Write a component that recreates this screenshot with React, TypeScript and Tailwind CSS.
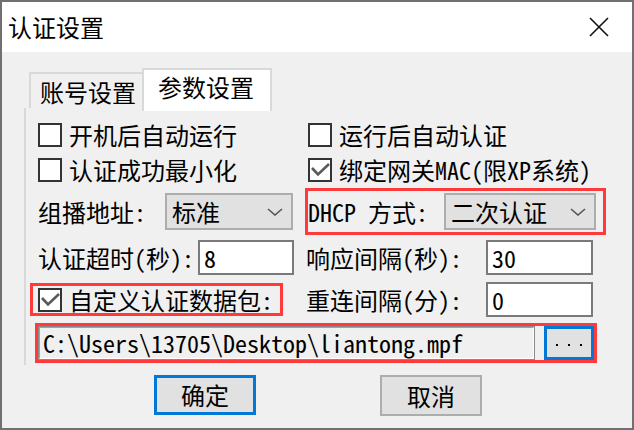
import type { ReactNode } from 'react';

function Checkbox({ checked = false }: { checked?: boolean }) {
  return (
    <div className="w-[24px] h-[24px] border-2 border-[#333] bg-white shrink-0">
      {checked && (
        <svg viewBox="0 0 20 20" className="w-[20px] h-[20px]">
          <polyline points="2,8 8,14.5 19,4" fill="none" stroke="#5a5a5a" strokeWidth="2.6" />
        </svg>
      )}
    </div>
  );
}

function Chevron() {
  return (
    <svg viewBox="0 0 16 8" className="w-[16px] h-[8px]">
      <polyline points="1,1 8,7 15,1" fill="none" stroke="#555" strokeWidth="1.6" />
    </svg>
  );
}

function Select({ value, className }: { value: string; className: string }) {
  return (
    <div
      className={`h-[37px] border-2 border-[#adadad] bg-[#e1e1e1] flex items-center justify-between pl-[5px] pr-[8px] ${className}`}
    >
      <span>{value}</span>
      <Chevron />
    </div>
  );
}

function Input({ value, className }: { value: string; className: string }) {
  return (
    <div className={`h-[35px] border-2 border-[#7a7a7a] bg-white flex items-center pl-[4px] ${className}`}>
      {value}
    </div>
  );
}

function Check({ checked, children }: { checked?: boolean; children: ReactNode }) {
  return (
    <div className="flex items-center gap-[7px]">
      <Checkbox checked={checked} />
      <span>{children}</span>
    </div>
  );
}

export default function App() {
  return (
    <div className="w-[634px] h-[430px] border-2 border-[#707070] bg-[#f0f0f0] text-black text-[24px] leading-[24px] font-['Noto_Sans_Mono_CJK_SC','Noto_Sans_CJK_SC',monospace] overflow-hidden">
      <div className="h-[50px] bg-white flex items-center justify-between pl-[6px] pr-[23px]">
        <span className="font-['Noto_Sans_CJK_SC',sans-serif] text-[24px]">认证设置</span>
        <svg viewBox="0 0 20 20" className="w-[20px] h-[20px]">
          <path d="M1 1 L19 19 M19 1 L1 19" stroke="#111" strokeWidth="1.6" fill="none" />
        </svg>
      </div>

      <div className="pt-[16px] pl-[22px]">
        <div className="relative z-10 flex items-end pl-[5px] h-[43px]">
          <div className="w-[115px] h-[36px] mb-[3px] border-2 border-b-0 border-[#d9d9d9] pl-[9px] pt-[6px]">
            账号设置
          </div>
          <div className="-ml-[2px] w-[130px] h-[43px] bg-white border-2 border-b-0 border-[#d9d9d9] pl-[14px] pt-[5px]">
            参数设置
          </div>
        </div>

        <div className="-mt-[3px] h-[257px] border-l-2 border-[#d9d9d9] pl-[12px] pt-[11px]">
          <div className="h-[32px] flex items-center">
            <div className="w-[270px]">
              <Check>开机后自动运行</Check>
            </div>
            <Check>运行后自动认证</Check>
          </div>

          <div className="mt-[3px] h-[32px] flex items-center">
            <div className="w-[270px]">
              <Check>认证成功最小化</Check>
            </div>
            <Check checked>绑定网关MAC(限XP系统)</Check>
          </div>

          <div className="mt-[2px] h-[47px] flex items-center">
            <div className="w-[255px] flex items-center justify-between">
              <span>组播地址:</span>
              <Select value="标准" className="w-[128px]" />
            </div>
            <div className="ml-[12px] w-[301px] h-[47px] border-[3px] border-[#fe3a3a] flex items-center justify-between pr-[7px]">
              <span>DHCP 方式:</span>
              <Select value="二次认证" className="w-[152px]" />
            </div>
          </div>

          <div className="mt-[5px] h-[35px] flex items-center">
            <div className="w-[256px] flex items-center justify-between">
              <span>认证超时(秒):</span>
              <Input value="8" className="w-[96px]" />
            </div>
            <div className="ml-[12px] w-[287px] flex items-center justify-between">
              <span>响应间隔(秒):</span>
              <Input value="30" className="w-[107px]" />
            </div>
          </div>

          <div className="mt-[7px] h-[35px] flex items-center">
            <div className="-ml-[8px] w-[253px] h-[33px] border-[3px] border-[#fe3a3a] pl-[5px] flex items-center">
              <Check checked>自定义认证数据包:</Check>
            </div>
            <div className="ml-[23px] w-[287px] flex items-center justify-between">
              <span>重连间隔(分):</span>
              <Input value="0" className="w-[107px]" />
            </div>
          </div>

          <div className="mt-[6px] -ml-[3px] w-[562px] h-[40px] border-[3px] border-[#fe3a3a] flex items-center justify-between">
            <div className="w-[497px] h-[34px] border border-[#8a8a8a] flex">
              <div className="flex-1 border border-t-[#a0a0a0] border-l-[#a0a0a0] border-r-white border-b-white flex items-center pl-[3px]">
                C:\Users\13705\Desktop\liantong.mpf
              </div>
            </div>
            <div className="w-[50px] h-[34px] border-[3px] border-[#0078d7] bg-[#e1e1e1] flex items-center justify-center gap-[10px] pt-[4px]">
              <span className="w-[2px] h-[2px] bg-black" />
              <span className="w-[2px] h-[2px] bg-black" />
              <span className="w-[2px] h-[2px] bg-black" />
            </div>
          </div>
        </div>
      </div>

      <div className="mt-[10px] flex pl-[152px] gap-[124px]">
        <div className="w-[102px] h-[40px] border-[3px] border-[#0078d7] bg-[#e1e1e1] flex items-center justify-center">
          确定
        </div>
        <div className="w-[102px] h-[41px] border-2 border-[#adadad] bg-[#e1e1e1] flex items-center justify-center">
          取消
        </div>
      </div>
    </div>
  );
}
